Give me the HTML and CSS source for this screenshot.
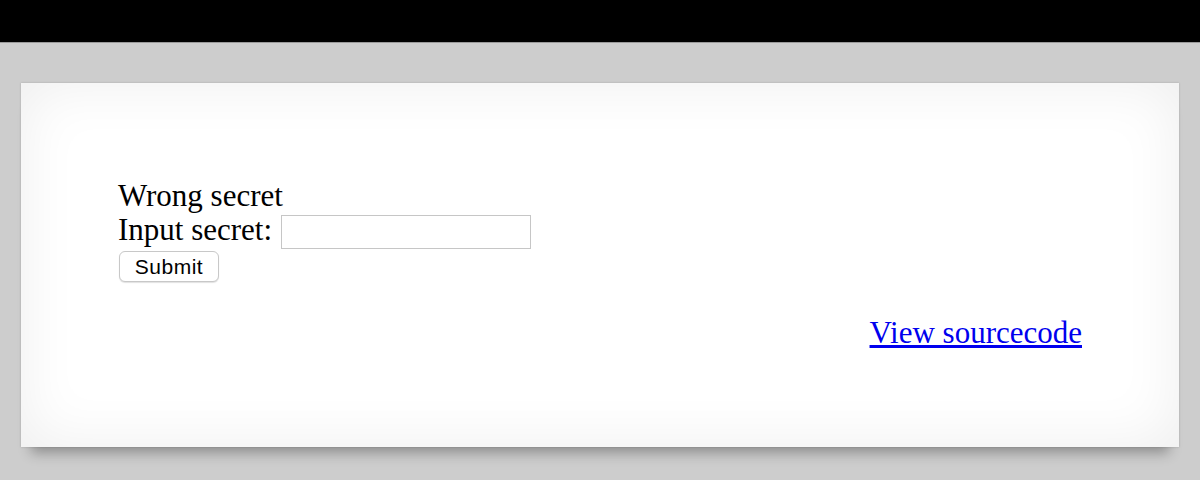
FILE: index.html
```html
<!DOCTYPE html>
<html>
<head>
<meta charset="utf-8">
<link rel="stylesheet" href="styles.css">
</head>
<body>
<div class="topbar"></div>
<div class="card">
  <div class="msg">Wrong secret</div>
  <form class="form">
    <div class="row">
      <label class="label" for="secret">Input secret:</label>
      <input class="input" id="secret" type="text">
    </div>
    <button class="btn" type="button">Submit</button>
  </form>
  <div class="links"><a class="src" href="#">View sourcecode</a></div>
</div>
</body>
</html>
```
FILE: styles.css
```css
html, body {
  margin: 0;
  padding: 0;
}
body {
  background: #cdcdcd;
  font-family: "Liberation Serif", "Times New Roman", serif;
  font-size: 31px;
  color: #000;
  height: 480px;
  overflow: hidden;
}
.topbar {
  height: 42px;
  background: #000;
  border-bottom: 1px solid #9a9a9a;
}
.card {
  margin: 40px 21px 0 21px;
  height: 364px;
  box-sizing: border-box;
  padding: 96px 97px 0 97px;
  background: #fff;
  box-shadow:
    inset 0 0 60px rgba(0, 0, 0, 0.07),
    0 0 2px rgba(0, 0, 0, 0.18),
    0 16px 12px -10px rgba(0, 0, 0, 0.3);
}
.msg {
  line-height: 34px;
  height: 34px;
}
.form {
  margin: 0;
}
.row {
  display: flex;
  align-items: flex-start;
  height: 36px;
}
.label {
  line-height: 34px;
}
.input {
  margin: 2px 0 0 9px;
  width: 250px;
  height: 34px;
  box-sizing: border-box;
  border: 1px solid #c6c6c6;
  padding: 0 6px;
  background: #fff;
  font-size: 20px;
  outline: none;
}
.btn {
  display: block;
  margin: 2px 0 0 1px;
  width: 100px;
  height: 31px;
  box-sizing: border-box;
  padding: 0;
  border: 1px solid #c8c8c8;
  border-radius: 6px;
  background: #fff;
  box-shadow: 0 1px 1px rgba(0, 0, 0, 0.12);
  font-family: "Liberation Sans", Arial, sans-serif;
  font-size: 21px;
  letter-spacing: 0.5px;
  color: #000;
}
.links {
  margin-top: 34px;
  text-align: right;
  line-height: 34px;
}
.src {
  color: #0000ee;
  text-decoration: underline;
}
```
